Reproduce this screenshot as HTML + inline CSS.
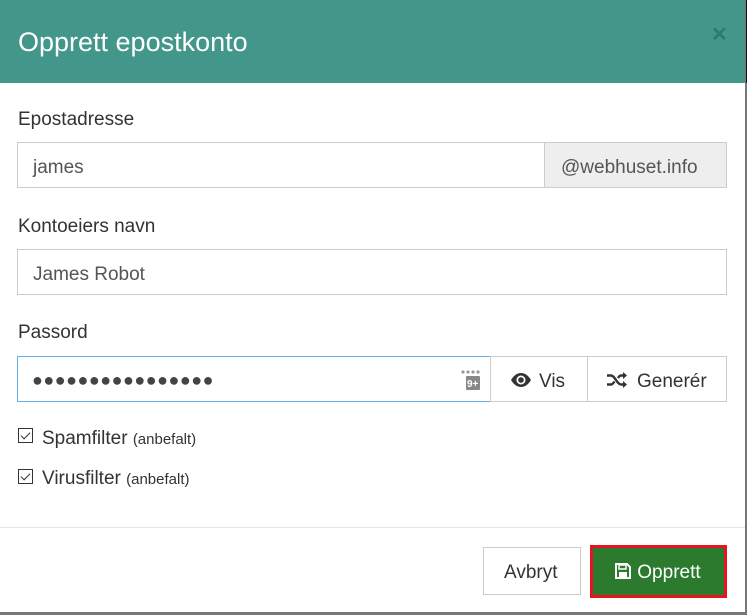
<!DOCTYPE html>
<html><head><style>
*{box-sizing:border-box;margin:0;padding:0}
body{width:747px;height:615px;background:#fff;font-family:"Liberation Sans",Arial,sans-serif;position:relative;overflow:hidden;color:#333}
.hdr{position:absolute;left:0;top:0;width:746px;height:83px;background:#42968a}
.hdr h1{position:absolute;left:18px;top:27px;font-size:27px;font-weight:normal;color:#fff}
.x{position:absolute;left:711px;top:22px;color:#2f7a6e;font-size:20px;font-weight:bold}
.rb{position:absolute;left:745px;top:0;width:2px;height:615px;background:#777}
.rb2{position:absolute;left:746px;top:0;width:1px;height:83px;background:#111}
.bb{position:absolute;left:0;top:612px;width:747px;height:3px;background:#777}
.lbl{position:absolute;left:18px;font-size:19px;color:#333}
.inp{position:absolute;border:1px solid #ccc;height:46px;font-size:19px;padding:14px 15px 0;color:#555}
.chk{position:absolute;left:18px;width:15px;height:15px;border:1px solid #333}
.chk:after{content:"";position:absolute;left:4px;top:1px;width:4px;height:8px;border:solid #333;border-width:0 1.5px 1.5px 0;transform:rotate(45deg)}
.ct{position:absolute;left:42px;font-size:19px;color:#333}
.ct small{font-size:15px}
.sep{position:absolute;left:0;top:527px;width:745px;height:1px;background:#e5e5e5}
</style></head><body>
<div class="hdr"><h1>Opprett epostkonto</h1><div class="x">✕</div></div>
<div class="rb"></div><div class="rb2"></div><div class="bb"></div>
<div class="lbl" style="top:109px">Epostadresse</div>
<div class="inp" style="left:17px;top:142px;width:528px">james</div>
<div class="inp" style="left:544px;top:142px;width:183px;background:#eee;color:#555;padding-left:16px">@webhuset.info</div>
<div class="lbl" style="top:216px">Kontoeiers navn</div>
<div class="inp" style="left:17px;top:249px;width:710px">James Robot</div>
<div class="lbl" style="top:322px">Passord</div>
<div class="inp" style="left:17px;top:356px;width:474px;border-color:#66afe9;font-size:18px;padding-top:13px;letter-spacing:0.5px;color:#444;padding-left:14px">●●●●●●●●●●●●●●●●</div>
<svg style="position:absolute;left:461px;top:370px" width="20" height="20"><g fill="#999"><circle cx="2" cy="2" r="1.6"/><circle cx="7" cy="2" r="1.6"/><circle cx="12" cy="2" r="1.6"/><circle cx="17" cy="2" r="1.6"/></g><rect x="5" y="6" width="14" height="14" rx="1" fill="#888"/><text x="6" y="17" font-size="10" fill="#fff" font-family="Liberation Sans" font-weight="bold">9+</text></svg>
<div class="inp" style="left:490px;top:356px;width:98px;color:#333;padding-left:48px">Vis</div>
<svg style="position:absolute;left:510px;top:372px" width="22" height="16" viewBox="0 0 22 16"><path d="M1 8C4 3 7.5 1 11 1s7 2 10 7c-3 5-6.5 7-10 7S4 13 1 8z" fill="#333"/><circle cx="11" cy="8" r="4.5" fill="#fff"/><circle cx="11" cy="8" r="2.8" fill="#333"/></svg>
<div class="inp" style="left:587px;top:356px;width:140px;color:#333;padding-left:49px">Generér</div>
<svg style="position:absolute;left:606px;top:372px" width="22" height="16" viewBox="0 0 22 16"><path d="M1 3.5h4c4 0 6 9 10 9h3M1 12.5h4c1.5 0 2.5-1.5 3.5-3M12 6c1-1.5 2-2.5 3-2.5h3" fill="none" stroke="#333" stroke-width="2.4"/><path d="M17 0l4 3.5-4 3.5zM17 9l4 3.5-4 3.5z" fill="#333"/></svg>
<div class="chk" style="top:428px"></div><div class="ct" style="top:428px">Spamfilter <small>(anbefalt)</small></div>
<div class="chk" style="top:469px"></div><div class="ct" style="top:468px">Virusfilter <small>(anbefalt)</small></div>
<div class="sep"></div>
<div style="position:absolute;left:483px;top:547px;width:98px;height:48px;border:1px solid #ccc;font-size:19px;padding:14px 0 0 20px;color:#333">Avbryt</div>
<div style="position:absolute;left:590px;top:545px;width:137px;height:53px;border:3px solid #e5141f;background:#2c7a2e;color:#fff;font-size:19px;padding:14px 0 0 21px"><svg width="18" height="18" viewBox="0 0 18 18" style="vertical-align:-2px"><path d="M2 2h11l3 3v11H2z" fill="none" stroke="#fff" stroke-width="2"/><rect x="5" y="3" width="7" height="4" fill="none" stroke="#fff" stroke-width="1.5"/><rect x="5" y="10" width="8" height="5" fill="#fff"/></svg> Opprett</div>
</body></html>
